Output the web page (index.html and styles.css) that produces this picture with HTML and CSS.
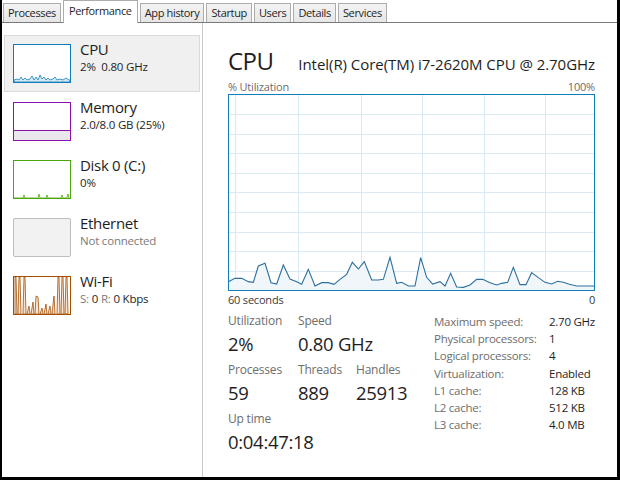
FILE: index.html
```html
<!DOCTYPE html>
<html>
<head>
<meta charset="utf-8">
<link rel="stylesheet" href="styles.css">
</head>
<body>
<div class="app">
  <div class="tabs">
    <div class="tab">Processes</div>
    <div class="tab active">Performance</div>
    <div class="tab">App history</div>
    <div class="tab">Startup</div>
    <div class="tab">Users</div>
    <div class="tab">Details</div>
    <div class="tab">Services</div>
  </div>
  <div class="content">
    <div class="sidebar">
      <div class="item selected">
        <svg class="thumb" width="58" height="39" viewBox="0 0 58 39">
          <rect x="0.5" y="0.5" width="57" height="38" fill="#fff" stroke="#117dbb"/>
          <polygon points="1,38 1,36 4,35 6,36 8,33 10,36 12,34 14,36 17,35 19,32 21,36 23,33 25,36 27,31 29,35 31,33 33,36 35,34 37,36 40,35 42,33 44,36 47,35 50,36 53,34 56,36 57,36 57,38" fill="#d8e9f4" stroke="#117dbb" stroke-width="0.8"/>
        </svg>
        <div class="info">
          <div class="name">CPU</div>
          <div class="sub">2%&nbsp; 0.80 GHz</div>
        </div>
      </div>
      <div class="item">
        <svg class="thumb" width="58" height="39" viewBox="0 0 58 39">
          <rect x="0.5" y="0.5" width="57" height="38" fill="#fff" stroke="#8b12ae"/>
          <rect x="1" y="29" width="56" height="9" fill="#ebe8ed"/>
          <line x1="1" y1="28.5" x2="57" y2="28.5" stroke="#8b12ae"/>
        </svg>
        <div class="info">
          <div class="name">Memory</div>
          <div class="sub">2.0/8.0 GB (25%)</div>
        </div>
      </div>
      <div class="item">
        <svg class="thumb" width="58" height="39" viewBox="0 0 58 39">
          <rect x="0.5" y="0.5" width="57" height="38" fill="#fff" stroke="#4da60c"/>
          <polyline points="1,38 10,38 11,35 12,38 25,38 26,34 27,38 33,38 34,35 35,38 48,38 49,35 50,38 54,38 55,34 56,38" fill="none" stroke="#4da60c" stroke-width="0.8"/>
        </svg>
        <div class="info">
          <div class="name">Disk 0 (C:)</div>
          <div class="sub">0%</div>
        </div>
      </div>
      <div class="item">
        <svg class="thumb" width="58" height="39" viewBox="0 0 58 39">
          <rect x="0.5" y="0.5" width="57" height="38" rx="1.5" fill="#f2f2f2" stroke="#bdbdbd"/>
        </svg>
        <div class="info">
          <div class="name">Ethernet</div>
          <div class="sub gray">Not connected</div>
        </div>
      </div>
      <div class="item">
        <svg class="thumb" width="58" height="39" viewBox="0 0 58 39">
          <rect x="0.5" y="0.5" width="57" height="38" fill="#fff" stroke="#a74f01"/>
          <g fill="#f6e3d4" stroke="#a74f01" stroke-width="0.8">
            <polygon points="2,38 2,1 3,1 4,38"/>
            <polygon points="5,38 6,1 7,1 8,38"/>
            <polygon points="10,38 11,1 12,1 13,38"/>
            <polygon points="14,38 16,30 17,38"/>
            <polygon points="18,38 20,26 21,38"/>
            <polygon points="22,38 23,20 25,21 26,38"/>
            <polygon points="27,38 29,32 30,38"/>
            <polygon points="31,38 33,28 34,38"/>
            <polygon points="35,38 37,30 38,38"/>
            <polygon points="39,38 41,20 42,38"/>
            <polygon points="44,38 45,1 46,1 47,38"/>
            <polygon points="48,38 49,1 50,1 51,38"/>
            <polygon points="52,38 53,1 54,1 55,38"/>
          </g>
        </svg>
        <div class="info">
          <div class="name">Wi-Fi</div>
          <div class="sub"><span class="gray">S:</span> 0 <span class="gray">R:</span> 0 Kbps</div>
        </div>
      </div>
    </div>
    <div class="main">
      <div class="header">
        <div class="title">CPU</div>
        <div class="model">Intel(R) Core(TM) i7-2620M CPU @ 2.70GHz</div>
      </div>
      <div class="axis"><span>% Utilization</span><span>100%</span></div>
      <svg class="graph" width="367" height="197" viewBox="0 0 367 197">
        <rect x="0" y="0" width="367" height="197" fill="#fff"/>
        <g stroke="#d9eaf4" stroke-width="1">
          <line x1="7.5" y1="0" x2="7.5" y2="197"/>
          <line x1="70.5" y1="0" x2="70.5" y2="197"/>
          <line x1="133.5" y1="0" x2="133.5" y2="197"/>
          <line x1="194.5" y1="0" x2="194.5" y2="197"/>
          <line x1="256.5" y1="0" x2="256.5" y2="197"/>
          <line x1="317.5" y1="0" x2="317.5" y2="197"/>
          <line x1="0" y1="20.5" x2="367" y2="20.5"/>
          <line x1="0" y1="40.5" x2="367" y2="40.5"/>
          <line x1="0" y1="59.5" x2="367" y2="59.5"/>
          <line x1="0" y1="79.5" x2="367" y2="79.5"/>
          <line x1="0" y1="98.5" x2="367" y2="98.5"/>
          <line x1="0" y1="118.5" x2="367" y2="118.5"/>
          <line x1="0" y1="138.5" x2="367" y2="138.5"/>
          <line x1="0" y1="157.5" x2="367" y2="157.5"/>
          <line x1="0" y1="177.5" x2="367" y2="177.5"/>
        </g>
        <g transform="translate(-18 146) scale(0.33333)">
          <polygon fill="#f1f6fa" stroke="none" points="55,150 55,125 75,115 95,115 115,125 130,127 145,78 165,70 183,128 200,132 220,75 240,117 260,125 275,133 295,88 315,138 335,128 355,128 372,133 390,118 410,103 427,67 445,87 463,65 485,120 505,120 520,118 540,52 560,130 575,127 595,138 615,138 632,53 650,112 668,132 690,125 705,138 722,100 740,141 760,142 780,135 800,118 818,118 840,128 860,135 875,130 893,127 910,82 930,134 948,134 965,98 985,113 1005,127 1025,132 1043,124 1060,127 1078,133 1100,138 1125,138 1153,138 1153,150"/>
          <polyline fill="none" stroke="#2c6f9e" stroke-width="1.1" vector-effect="non-scaling-stroke" points="55,125 75,115 95,115 115,125 130,127 145,78 165,70 183,128 200,132 220,75 240,117 260,125 275,133 295,88 315,138 335,128 355,128 372,133 390,118 410,103 427,67 445,87 463,65 485,120 505,120 520,118 540,52 560,130 575,127 595,138 615,138 632,53 650,112 668,132 690,125 705,138 722,100 740,141 760,142 780,135 800,118 818,118 840,128 860,135 875,130 893,127 910,82 930,134 948,134 965,98 985,113 1005,127 1025,132 1043,124 1060,127 1078,133 1100,138 1125,138 1153,138"/>
        </g>
        <rect x="0.5" y="0.5" width="366" height="196" fill="none" stroke="#117dbb"/>
      </svg>
      <div class="axis bottom"><span>60 seconds</span><span>0</span></div>
      <div class="stats">
        <div class="left">
          <div class="cell"><div class="lbl">Utilization</div><div class="val">2%</div></div>
          <div class="cell"><div class="lbl">Speed</div><div class="val">0.80 GHz</div></div>
          <div class="cell"></div>
          <div class="cell"><div class="lbl">Processes</div><div class="val">59</div></div>
          <div class="cell"><div class="lbl">Threads</div><div class="val">889</div></div>
          <div class="cell"><div class="lbl">Handles</div><div class="val">25913</div></div>
          <div class="cell span"><div class="lbl">Up time</div><div class="val">0:04:47:18</div></div>
        </div>
        <div class="right">
          <div class="k">Maximum speed:</div><div class="v">2.70 GHz</div>
          <div class="k">Physical processors:</div><div class="v">1</div>
          <div class="k">Logical processors:</div><div class="v">4</div>
          <div class="k">Virtualization:</div><div class="v">Enabled</div>
          <div class="k">L1 cache:</div><div class="v">128 KB</div>
          <div class="k">L2 cache:</div><div class="v">512 KB</div>
          <div class="k">L3 cache:</div><div class="v">4.0 MB</div>
        </div>
      </div>
    </div>
  </div>
</div>
</body>
</html>
```

FILE: styles.css
```css
* { box-sizing: border-box; }
html, body { margin: 0; padding: 0; background: #000; }
body {
  font-family: "Open Sans", "Noto Sans", sans-serif;
  color: #1e1e1e;
  width: 620px;
  height: 480px;
  overflow: hidden;
}
.app {
  width: 620px;
  height: 480px;
  background: #fff;
  border-left: 2px solid #000;
  border-right: 3px solid #000;
  border-bottom: 3px solid #000;
  display: flex;
  flex-direction: column;
}
.tabs {
  display: flex;
  align-items: flex-end;
  gap: 2px;
  height: 23px;
  padding-left: 1px;
  border-bottom: 1px solid #7a7a7a;
  flex: none;
}
.tab {
  height: 19px;
  padding: 0 4px;
  font-size: 11px;
  line-height: 18px;
  color: #1e1e1e;
  background: linear-gradient(#f3f3f3, #e6e6e6);
  border: 1px solid #acacac;
  border-bottom: none;
  letter-spacing: -0.35px;
}
.tab.active {
  height: 23px;
  margin-bottom: -1px;
  background: #fff;
  border-color: #acacac;
  line-height: 20px;
  padding: 0 5px;
}
.content {
  flex: 1;
  display: flex;
  min-height: 0;
}
.sidebar {
  width: 201px;
  flex: none;
  border-right: 1px solid #c9c9c9;
  padding: 12px 2px 0 2px;
}
.item {
  height: 57px;
  margin-bottom: 1px;
  display: flex;
  align-items: flex-start;
  padding: 8px 0 0 8px;
  border: 1px solid transparent;
}
.item.selected {
  background: #f0f0f0;
  border-color: #dadada;
}
.thumb {
  display: block;
  flex: none;
}
.info {
  margin-left: 9px;
  margin-top: -5px;
}
.name {
  font-size: 15px;
  line-height: 20px;
  letter-spacing: -0.3px;
}
.sub {
  font-size: 11.5px;
  line-height: 16px;
  letter-spacing: -0.2px;
}
.gray { color: #7a7a7a; }
.main {
  flex: 1;
  padding: 22px 22px 0 25px;
}
.header {
  display: flex;
  justify-content: space-between;
  align-items: baseline;
  height: 35px;
}
.title {
  font-size: 24px;
  line-height: 32px;
  letter-spacing: -0.5px;
}
.model {
  font-size: 15px;
  letter-spacing: -0.05px;
}
.axis {
  display: flex;
  justify-content: space-between;
  font-size: 11px;
  line-height: 13px;
  color: #6d6d6d;
  height: 14px;
  letter-spacing: -0.2px;
}
.axis.bottom {
  height: auto;
  line-height: 16px;
  color: #3a3a3a;
  margin-top: 1px;
}
.graph { display: block; }
.stats {
  display: flex;
  margin-top: 5px;
}
.left {
  display: grid;
  grid-template-columns: 70px 58px 78px;
  row-gap: 3px;
  width: 206px;
  white-space: nowrap;
}
.cell.span { grid-column: 1 / 4; }
.lbl {
  font-size: 12px;
  line-height: 16px;
  color: #6d6d6d;
  letter-spacing: -0.2px;
}
.val {
  font-size: 18.5px;
  line-height: 30px;
  letter-spacing: -0.3px;
}
.right {
  display: grid;
  grid-template-columns: 115px auto;
  grid-auto-rows: 17.2px;
  font-size: 11.5px;
  line-height: 17px;
  letter-spacing: -0.25px;
  white-space: nowrap;
}
.k { color: #6d6d6d; }
.v { color: #1e1e1e; }
```
